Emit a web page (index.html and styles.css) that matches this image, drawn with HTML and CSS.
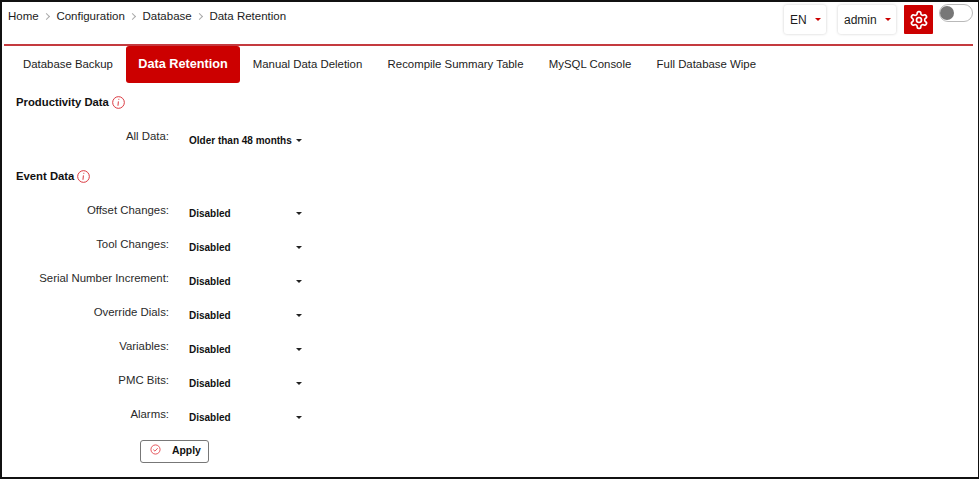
FILE: index.html
```html
<!DOCTYPE html>
<html lang="en">
<head>
<meta charset="utf-8">
<title>Data Retention</title>
<link rel="stylesheet" href="styles.css">
</head>
<body>
<div class="frame">
  <header class="topbar">
    <nav class="crumbs">
      <span>Home</span><i class="sep"></i><span>Configuration</span><i class="sep"></i><span>Database</span><i class="sep"></i><span>Data Retention</span>
    </nav>
    <div class="tools">
      <div class="pick pick-lang">EN<b class="caret-red"></b></div>
      <div class="pick pick-user">admin<b class="caret-red"></b></div>
      <button class="gear" aria-label="Settings">
        <svg width="20" height="20" viewBox="0 0 24 24" fill="none" stroke="#fff" stroke-width="2" stroke-linecap="round" stroke-linejoin="round"><path d="M12.22 2h-.44a2 2 0 0 0-2 2v.18a2 2 0 0 1-1 1.73l-.43.25a2 2 0 0 1-2 0l-.15-.08a2 2 0 0 0-2.73.73l-.22.38a2 2 0 0 0 .73 2.73l.15.1a2 2 0 0 1 1 1.72v.51a2 2 0 0 1-1 1.74l-.15.09a2 2 0 0 0-.73 2.73l.22.38a2 2 0 0 0 2.73.73l.15-.08a2 2 0 0 1 2 0l.43.25a2 2 0 0 1 1 1.73V20a2 2 0 0 0 2 2h.44a2 2 0 0 0 2-2v-.18a2 2 0 0 1 1-1.73l.43-.25a2 2 0 0 1 2 0l.15.08a2 2 0 0 0 2.73-.73l.22-.39a2 2 0 0 0-.73-2.73l-.15-.08a2 2 0 0 1-1-1.74v-.5a2 2 0 0 1 1-1.74l.15-.09a2 2 0 0 0 .73-2.73l-.22-.38a2 2 0 0 0-2.73-.73l-.15.08a2 2 0 0 1-2 0l-.43-.25a2 2 0 0 1-1-1.73V4a2 2 0 0 0-2-2z"/><circle cx="12" cy="12" r="3"/></svg>
      </button>
      <div class="toggle"><span class="knob"></span></div>
    </div>
  </header>
  <nav class="tabs">
    <a class="tab">Database Backup</a>
    <a class="tab active">Data Retention</a>
    <a class="tab">Manual Data Deletion</a>
    <a class="tab">Recompile Summary Table</a>
    <a class="tab">MySQL Console</a>
    <a class="tab">Full Database Wipe</a>
  </nav>
  <main class="content">
    <h2 class="section first">Productivity Data <svg class="info" viewBox="0 0 12 12"><circle cx="6" cy="6" r="5.4"/><path d="M6.3 2.6v.9M5.9 5l-.4 4"/></svg></h2>
    <div class="row row-all"><label>All Data:</label><span class="sel sel-wide">Older than 48 months<b class="caret"></b></span></div>
    <h2 class="section second">Event Data <svg class="info" viewBox="0 0 12 12"><circle cx="6" cy="6" r="5.4"/><path d="M6.3 2.6v.9M5.9 5l-.4 4"/></svg></h2>
    <div class="rows">
      <div class="row"><label>Offset Changes:</label><span class="sel">Disabled<b class="caret"></b></span></div>
      <div class="row"><label>Tool Changes:</label><span class="sel">Disabled<b class="caret"></b></span></div>
      <div class="row"><label>Serial Number Increment:</label><span class="sel">Disabled<b class="caret"></b></span></div>
      <div class="row"><label>Override Dials:</label><span class="sel">Disabled<b class="caret"></b></span></div>
      <div class="row"><label>Variables:</label><span class="sel">Disabled<b class="caret"></b></span></div>
      <div class="row"><label>PMC Bits:</label><span class="sel">Disabled<b class="caret"></b></span></div>
      <div class="row"><label>Alarms:</label><span class="sel">Disabled<b class="caret"></b></span></div>
    </div>
    <button class="apply">
      <svg width="11" height="11" viewBox="0 0 12 12" fill="none" stroke="#e2474f" stroke-width="1"><circle cx="6" cy="6" r="5"/><path d="M3.6 6.1l1.8 1.7 3-3.2"/></svg>
      <span>Apply</span>
    </button>
  </main>
</div>
</body>
</html>
```
FILE: styles.css
```css
* { box-sizing: border-box; }
html, body { margin: 0; padding: 0; }
body { width: 979px; height: 479px; background: #fff; font-family: "Liberation Sans", Arial, sans-serif; color: #1c1c1c; overflow: hidden; }
.frame { width: 979px; height: 479px; border: 2px solid #111; border-right-width: 1px; }
.topbar { display: flex; justify-content: space-between; height: 44px; margin: 0 5px 0 2px; border-bottom: 2px solid #c43a3f; }
.crumbs { display: flex; align-items: center; height: 28px; padding-left: 4px; font-size: 11.5px; }
.sep { width: 5px; height: 5px; margin: 0 7.7px 0 5px; border-top: 1px solid #aaa; border-right: 1px solid #aaa; transform: rotate(45deg); }
.tools { display: flex; align-items: flex-start; padding-top: 3px; }
.pick { display: flex; align-items: center; height: 29px; background: #fff; border-radius: 3px; box-shadow: 0 0 3px rgba(0,0,0,.2); font-size: 12px; padding-left: 6px; }
.pick-lang { width: 42px; margin-right: 12px; }
.pick-user { width: 58px; margin-right: 8px; }
.caret-red { width: 0; height: 0; margin-left: auto; margin-right: 5px; border: 3.5px solid transparent; border-top: 3.5px solid #cc0000; border-bottom: 0; }
.gear { display: flex; align-items: center; justify-content: center; width: 29px; height: 29px; padding: 0; border: 0; border-radius: 1px; background: #cc0000; }
.toggle { width: 34px; height: 18px; margin: -1px 0 0 6px; border: 1.5px solid #b9b9b9; border-radius: 9px; background: #fff; padding: 0.5px 0; }
.knob { display: block; width: 14px; height: 14px; border-radius: 50%; background: #777; }
.tabs { display: flex; align-items: flex-start; height: 37px; padding-left: 9px; }
.tab { height: 37px; padding: 0 12px; line-height: 36px; font-size: 11.4px; color: #1c1c1c; margin-right: 1.3px; }
.tab.active { background: #cc0000; color: #fff; font-weight: bold; font-size: 12.7px; border-radius: 3px; margin-right: 1px; }
.content { padding-left: 14px; }
.section { display: flex; align-items: center; gap: 3px; margin: 0; height: 16px; font-size: 11.3px; font-weight: bold; color: #111; }
.section.first { margin-top: 11px; }
.section.second { margin-top: 5px; }
.info { width: 13px; height: 13px; fill: none; stroke: #d9333b; stroke-width: .9; }
.row { display: flex; align-items: flex-start; height: 34px; }
.row-all { height: 34px; margin-top: 19px; }
.rows { margin-top: 19px; }
.row label { width: 153px; text-align: right; font-size: 11.4px; color: #2a2a2a; line-height: 14px; }
.sel { display: flex; align-items: center; width: 113px; margin-left: 20px; margin-top: 4px; height: 13px; font-size: 10px; font-weight: bold; color: #111; }
.sel-wide { margin-top: 5px; }
.caret { width: 0; height: 0; margin-left: auto; border: 3px solid transparent; border-top: 3px solid #222; border-bottom: 0; }
.apply { display: flex; align-items: center; width: 69px; height: 23px; margin: -1px 0 0 124px; padding: 0 0 2px 9px; background: #fff; border: 1px solid #777; border-radius: 3px; font: bold 10.4px "Liberation Sans", Arial, sans-serif; color: #111; }
.apply svg { margin-top: -3px; }
.apply span { margin-left: 11px; }
```
